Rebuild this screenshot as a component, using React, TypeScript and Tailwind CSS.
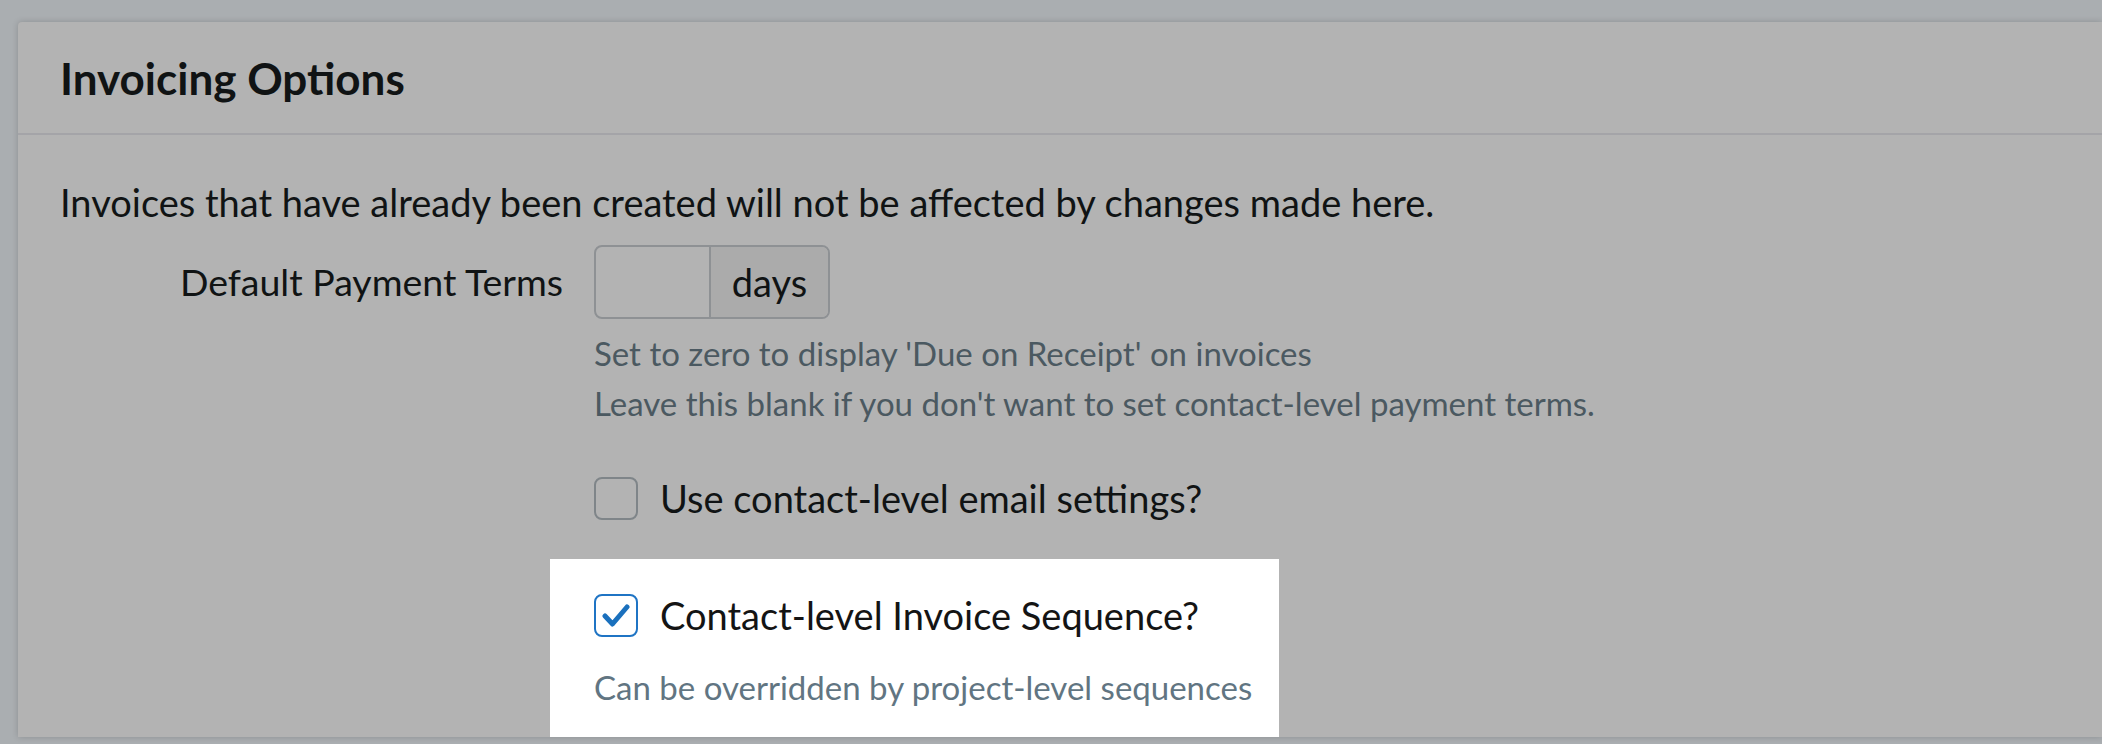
const font = { fontFamily: "Lato, 'Noto Sans', sans-serif" };

export default function App() {
  return (
    <div
      className="min-h-screen w-full overflow-hidden bg-[#aaaeb1] pl-[18px] pt-[22px]"
      style={font}
    >
      <div className="w-full rounded-tl-[4px] bg-[#b3b3b3] shadow-[0_0_6px_rgba(0,0,0,0.18)]">
        {/* Header */}
        <div className="flex h-[113px] items-center border-b-2 border-[#a4a4a8] px-[42px]">
          <h2 className="text-[44px] font-bold leading-none text-[#101314]">Invoicing Options</h2>
        </div>

        {/* Body */}
        <div className="px-[42px] pt-[43px]">
          <p className="text-[38px] leading-[48px] text-[#101314]">
            Invoices that have already been created will not be affected by changes made here.
          </p>

          <div className="mt-[19px] grid grid-cols-[503px_1fr] gap-x-[31px]">
            {/* Payment terms */}
            <div className="flex h-[74px] items-center justify-end text-[37.5px] text-[#101314]">
              Default Payment Terms
            </div>
            <div>
              <div className="flex h-[74px] w-[236px] overflow-hidden rounded-[8px] border-2 border-[#8e9194]">
                <input className="w-[113px] bg-transparent outline-none" aria-label="days" />
                <div className="flex flex-1 items-center justify-center border-l-2 border-[#8e9194] bg-[#ababab] text-[38px] text-[#101314]">
                  days
                </div>
              </div>
              <div className="mt-[9px] text-[33px] leading-[50px] text-[#4b5961]">
                <p>Set to zero to display 'Due on Receipt' on invoices</p>
                <p>Leave this blank if you don't want to set contact-level payment terms.</p>
              </div>
            </div>

            {/* Email settings */}
            <div />
            <div>
              <label className="mt-[47px] flex h-[46px] items-center gap-[22px]">
                <span className="h-[43px] w-[44px] rounded-[8px] border-2 border-[#7f8589]" />
                <span className="text-[38px] text-[#101314]">Use contact-level email settings?</span>
              </label>

              {/* Highlighted option */}
              <div className="-ml-[44px] mt-[38px] w-[729px] bg-white pb-[30px] pl-[44px] pt-[33px]">
                <label className="flex h-[46px] items-center gap-[22px]">
                  <span className="flex h-[43px] w-[44px] items-center justify-center rounded-[8px] border-2 border-[#1f74c4]">
                    <svg width="28" height="25" viewBox="0 0 28 25" fill="none">
                      <polyline
                        points="3,13 10.5,21 25,4"
                        stroke="#1a70bd"
                        strokeWidth="5"
                        strokeLinecap="round"
                        strokeLinejoin="round"
                      />
                    </svg>
                  </span>
                  <span className="text-[38px] text-[#141414]">Contact-level Invoice Sequence?</span>
                </label>
                <p className="mt-[29px] whitespace-nowrap text-[33px] leading-[40px] text-[#617582]">
                  Can be overridden by project-level sequences
                </p>
              </div>
            </div>
          </div>
        </div>
      </div>
    </div>
  );
}
